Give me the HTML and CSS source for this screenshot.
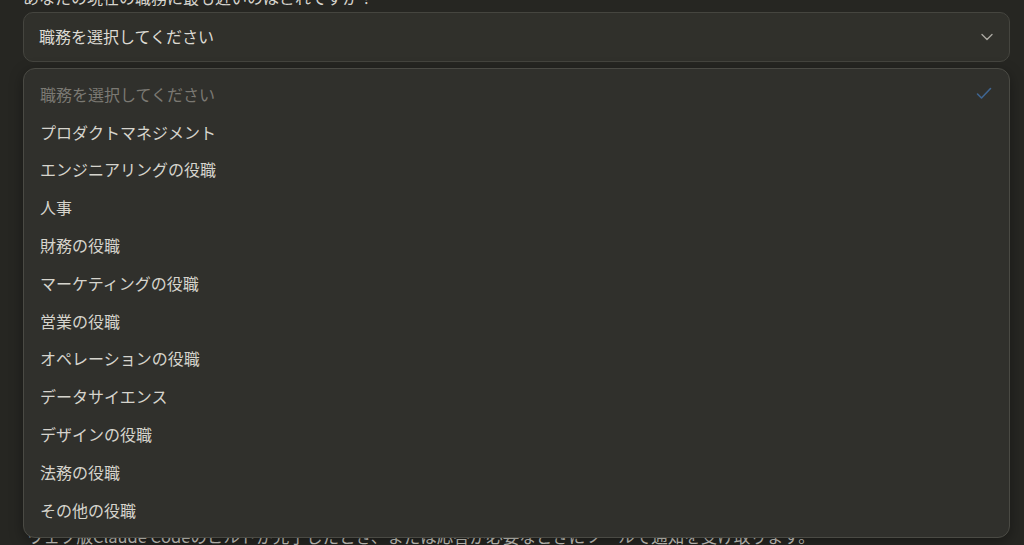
FILE: index.html
```html
<!DOCTYPE html>
<html lang="ja">
<head>
<meta charset="utf-8">
<link rel="stylesheet" href="styles.css">
</head>
<body>
<div class="page">
  <div class="field">
    <label class="label">あなたの現在の職務に最も近いのはどれですか？</label>
    <div class="select">
      <span class="select-value">職務を選択してください</span>
      <svg class="chevron" width="12" height="8" viewBox="0 0 12 8"><path d="M1 1.5 L6 6.5 L11 1.5" fill="none" stroke="#a9a7a0" stroke-width="1.4" stroke-linecap="round" stroke-linejoin="round"/></svg>
    </div>
    <ul class="menu">
      <li class="item placeholder">職務を選択してください
        <svg class="check" width="16" height="13" viewBox="0 0 16 13"><path d="M1.5 7 L5.5 11 L14.5 1.5" fill="none" stroke="#3f6591" stroke-width="1.6" stroke-linecap="round" stroke-linejoin="round"/></svg>
      </li>
      <li class="item">プロダクトマネジメント</li>
      <li class="item">エンジニアリングの役職</li>
      <li class="item">人事</li>
      <li class="item">財務の役職</li>
      <li class="item">マーケティングの役職</li>
      <li class="item">営業の役職</li>
      <li class="item">オペレーションの役職</li>
      <li class="item">データサイエンス</li>
      <li class="item">デザインの役職</li>
      <li class="item">法務の役職</li>
      <li class="item">その他の役職</li>
    </ul>
  </div>
  <p class="note">ウェブ版Claude Codeのビルドが完了したとき、または応答が必要なときにツールで通知を受け取ります。</p>
</div>
</body>
</html>
```
FILE: styles.css
```css
html, body {
  margin: 0;
  padding: 0;
  background: #262622;
  overflow: hidden;
  height: 545px;
}
body {
  font-family: "Noto Sans CJK JP", "Noto Sans", sans-serif;
  color: #d6d4cd;
}
.page {
  padding: 0 14px 0 23px;
  margin-top: -13px;
}
.field {
  position: relative;
}
.label {
  display: block;
  font-size: 16px;
  line-height: 20px;
  color: #d6d4cd;
  margin-bottom: 5px;
}
.select {
  height: 48px;
  border: 1px solid #45453f;
  border-radius: 10px;
  background: #30302b;
  display: flex;
  align-items: center;
  justify-content: space-between;
  padding: 0 16px 0 15px;
}
.select-value {
  font-size: 16px;
  line-height: 20px;
  padding-bottom: 3px;
  color: #dcdad3;
}
.chevron {
  display: block;
}
.menu {
  position: absolute;
  left: 0;
  right: 0;
  top: 81px;
  margin: 0;
  padding: 6px 0 8px;
  list-style: none;
  background: #30302c;
  border: 1px solid #4a4a44;
  border-radius: 12px;
  box-shadow: 0 4px 14px rgba(0,0,0,0.35);
  z-index: 2;
}
.item {
  height: 37.8px;
  display: flex;
  align-items: center;
  justify-content: space-between;
  padding: 0 17px 0 16px;
  font-size: 16px;
  color: #d6d4cd;
}
.item.placeholder {
  color: #7b7973;
}
.check {
  display: block;
}
.note {
  margin: 464px 0 0 4px;
  font-size: 16.5px;
  line-height: 20px;
  color: #cfcdc6;
  white-space: nowrap;
}
```
